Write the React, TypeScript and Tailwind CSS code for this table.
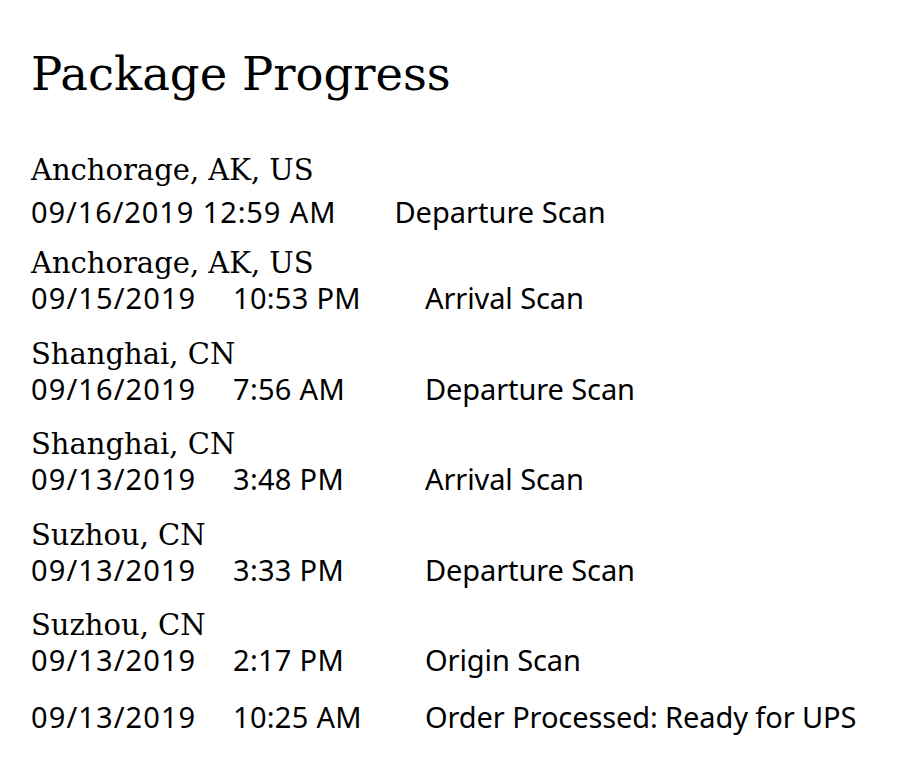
import React from 'react';

type Scan = { date: string; time: string; activity: string };
type Stop = { city?: string; scans: Scan[] };

const STOPS: Stop[] = [
  { city: 'Anchorage, AK, US', scans: [{ date: '09/15/2019', time: '10:53 PM', activity: 'Arrival Scan' }] },
  { city: 'Shanghai, CN', scans: [{ date: '09/16/2019', time: '7:56 AM', activity: 'Departure Scan' }] },
  { city: 'Shanghai, CN', scans: [{ date: '09/13/2019', time: '3:48 PM', activity: 'Arrival Scan' }] },
  { city: 'Suzhou, CN', scans: [{ date: '09/13/2019', time: '3:33 PM', activity: 'Departure Scan' }] },
  { city: 'Suzhou, CN', scans: [{ date: '09/13/2019', time: '2:17 PM', activity: 'Origin Scan' }] },
  { scans: [{ date: '09/13/2019', time: '10:25 AM', activity: 'Order Processed: Ready for UPS' }] },
];

const serif = "font-['DejaVu_Serif',serif]";
const sans = "font-['Noto_Sans',sans-serif]";

const City: React.FC<{ name: string }> = ({ name }) => (
  <div className={`${serif} text-[29px] leading-[40px] h-[37px]`}>{name}</div>
);

const ScanRow: React.FC<{ scan: Scan }> = ({ scan }) => (
  <div className={`${sans} grid grid-cols-[202px_192px_1fr] text-[29px] leading-[36px] h-[37px]`}>
    <span className="tracking-[1.1px]">{scan.date}</span>
    <span className="tracking-[0.3px]">{scan.time}</span>
    <span className="tracking-[-0.1px]">{scan.activity}</span>
  </div>
);

export default function App() {
  return (
    <main className="w-[898px] h-[767px] bg-white text-black pl-[31px] pt-[46px]">
      <h1 className={`${serif} text-[46.5px] leading-[56px] h-[56px]`}>Package Progress</h1>

      <section className="mt-[48px]">
        <City name="Anchorage, AK, US" />
        <div className={`${sans} flex items-center text-[29px] h-[50px]`}>
          <span className="tracking-[0.9px]">09/16/2019 12:59 AM</span>
          <span className="ml-[58px]">Departure Scan</span>
        </div>
      </section>

      <div className="mt-[6px] flex flex-col gap-[16.5px]">
        {STOPS.map((stop, i) => (
          <section key={i} className={stop.city ? '' : 'pt-[3px]'}>
            {stop.city && <City name={stop.city} />}
            {stop.scans.map((s, j) => (
              <ScanRow key={j} scan={s} />
            ))}
          </section>
        ))}
      </div>
    </main>
  );
}
